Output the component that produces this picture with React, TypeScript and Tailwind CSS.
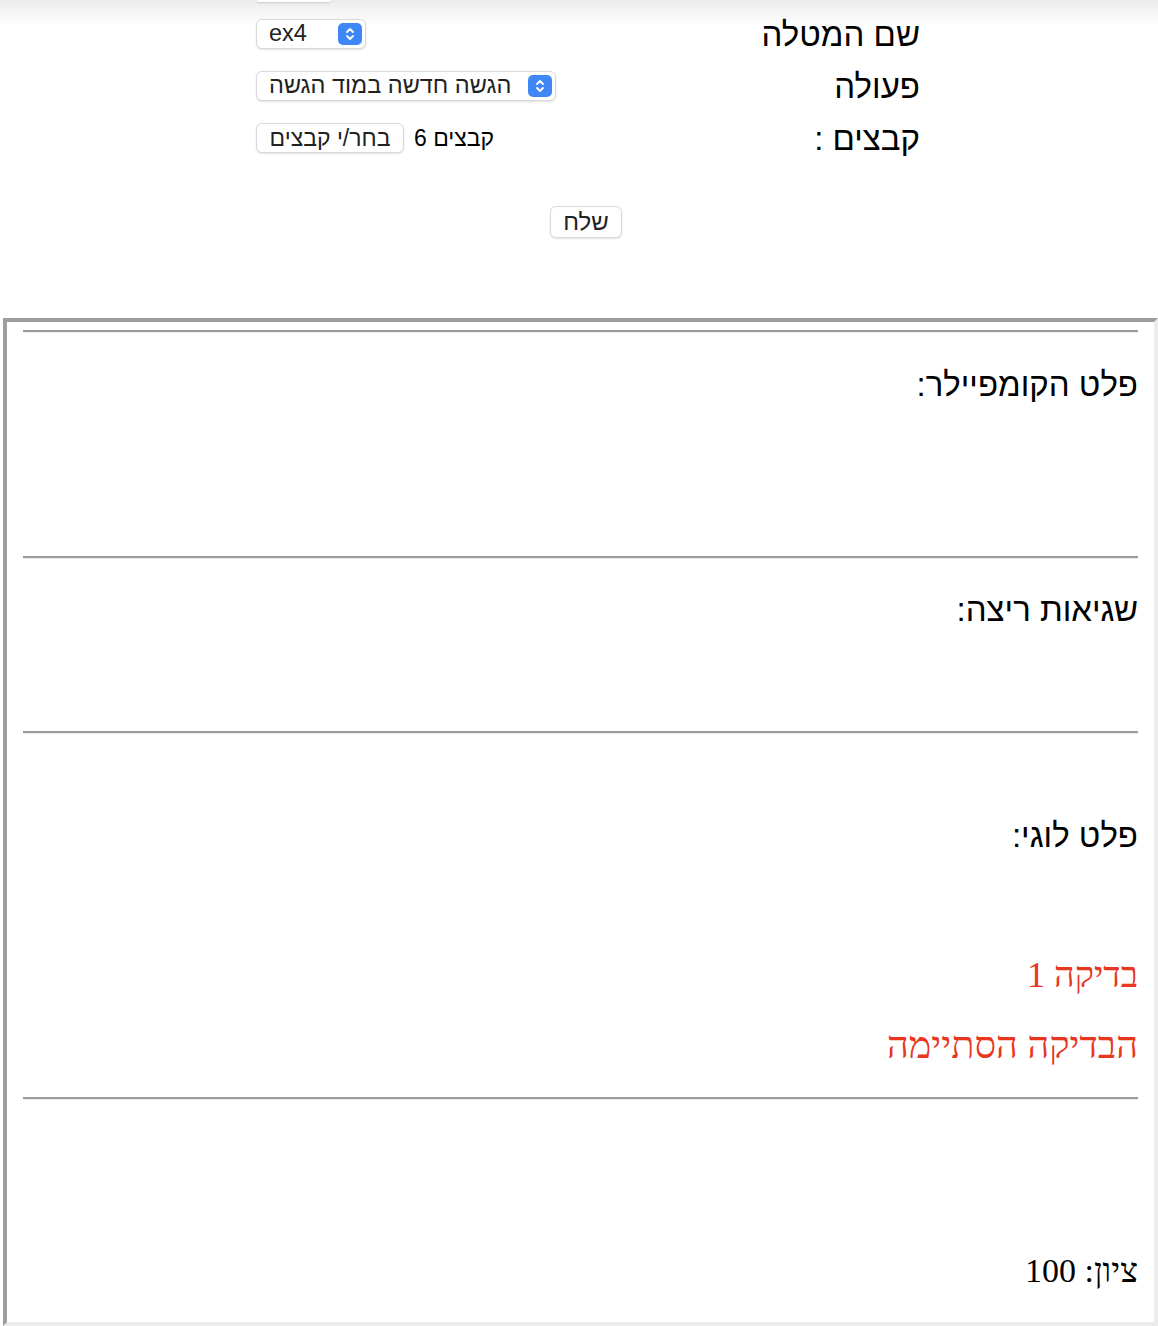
import React from 'react'

function Arrows() {
  return (
    <span className="flex h-[22px] w-[24px] items-center justify-center rounded-[5px] bg-[#3f87f6]">
      <svg width="12" height="16" viewBox="0 0 12 16" fill="none">
        <path d="M3 6 L6 3 L9 6" stroke="white" strokeWidth="1.8" strokeLinecap="round" strokeLinejoin="round" />
        <path d="M3 10 L6 13 L9 10" stroke="white" strokeWidth="1.8" strokeLinecap="round" strokeLinejoin="round" />
      </svg>
    </span>
  )
}

function FakeSelect({ value, width }: { value: string; width: string }) {
  return (
    <div
      className={`flex h-[30px] ${width} items-center justify-between rounded-[6px] border border-[#d9d9d9] bg-white pl-[12px] pr-[3px] shadow-[0_1px_2px_rgba(0,0,0,0.12)]`}
    >
      <span dir="auto" className="text-[23.5px] leading-none text-[#222]">{value}</span>
      <Arrows />
    </div>
  )
}

function Rule() {
  return <div className="h-[3px] border-t-2 border-b border-t-[#9b9b9b] border-b-[#ececec]" />
}

export default function App() {
  const sans = { fontFamily: '"Liberation Sans", Arial, sans-serif' }
  const serif = { fontFamily: '"Liberation Serif", "Times New Roman", serif' }

  return (
    <div className="min-h-[1326px] bg-[linear-gradient(to_bottom,#ececec_0px,#ffffff_26px)]" style={sans}>
      {/* cut-off control at the very top */}
      <div className="ml-[257px] h-[2px] w-[74px] rounded-b-[6px] bg-white shadow-[0_1px_2px_rgba(0,0,0,0.15)]" />

      {/* form */}
      <div className="pl-[256px] pr-[238px] pt-[6px]">
        <div className="flex h-[52px] items-center justify-between">
          <FakeSelect value="ex4" width="w-[110px]" />
          <span dir="rtl" className="text-[33px] leading-none text-black">שם המטלה</span>
        </div>
        <div className="flex h-[52px] items-center justify-between">
          <FakeSelect value="הגשה חדשה במוד הגשה" width="w-[300px]" />
          <span dir="rtl" className="text-[33px] leading-none text-black">פעולה</span>
        </div>
        <div className="flex h-[52px] items-center justify-between">
          <div className="flex items-center gap-[10px]">
            <button className="flex h-[30px] w-[148px] items-center justify-center rounded-[6px] border border-[#d9d9d9] bg-white text-[23px] leading-none text-[#222] shadow-[0_1px_2px_rgba(0,0,0,0.12)]">
              <span dir="rtl">בחר/י קבצים</span>
            </button>
            <span dir="rtl" className="text-[23px] leading-none text-black">קבצים 6</span>
          </div>
          <span dir="rtl" className="text-[33px] leading-none text-black">קבצים :</span>
        </div>
      </div>

      <div className="mt-[42px] flex justify-center pl-[14px]">
        <button className="flex h-[32px] w-[72px] items-center justify-center rounded-[6px] border border-[#d9d9d9] bg-white text-[24px] leading-none text-[#222] shadow-[0_1px_2px_rgba(0,0,0,0.12)]">
          שלח
        </button>
      </div>

      {/* results frame */}
      <div className="ml-[3px] mt-[80px] h-[1008px] w-[1155px] border-4 border-t-[#9e9e9e] border-l-[#9e9e9e] border-r-[#ececec] border-b-[#ececec] bg-white px-[16px] pt-[8px]">
        <Rule />
        <div dir="rtl" className="mt-[32px] h-[40px] text-[33px] leading-[40px] text-black">פלט הקומפיילר:</div>

        <div className="mt-[151px]"><Rule /></div>
        <div dir="rtl" className="mt-[31px] h-[40px] text-[33px] leading-[40px] text-black">שגיאות ריצה:</div>

        <div className="mt-[101px]"><Rule /></div>
        <div dir="rtl" className="mt-[82px] h-[40px] text-[33px] leading-[40px] text-black">פלט לוגי:</div>

        <div dir="rtl" className="mt-[99px] h-[40px] text-[36px] leading-[40px] text-[#e8361f]" style={serif}>בדיקה 1</div>
        <div dir="rtl" className="mt-[30px] h-[40px] text-[38px] leading-[40px] text-[#e8361f]" style={serif}>הבדיקה הסתיימה</div>

        <div className="mt-[32px]"><Rule /></div>
        <div dir="rtl" className="mt-[151px] h-[40px] text-[34px] leading-[40px] text-black" style={serif}>ציון: 100</div>
      </div>
    </div>
  )
}
